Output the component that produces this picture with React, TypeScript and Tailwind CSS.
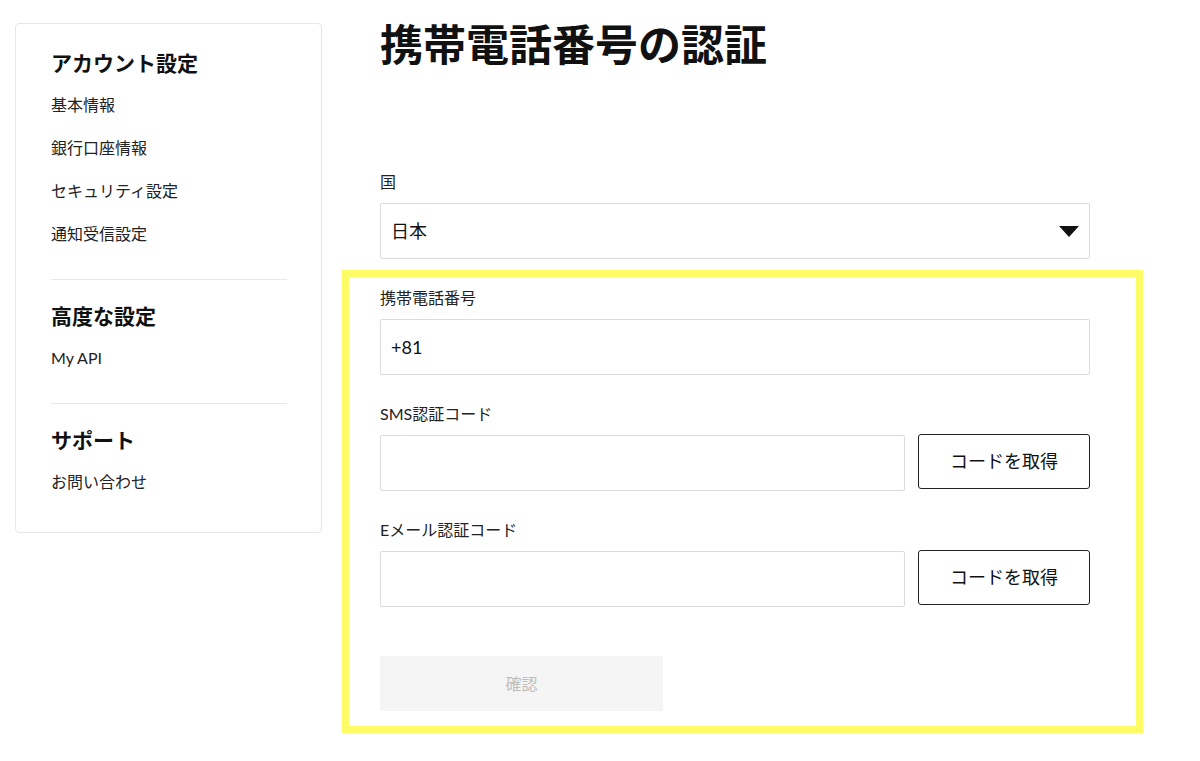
import { Fragment } from "react";

const font = { fontFamily: 'Lato, "Noto Sans CJK JP", sans-serif' };

const sections = [
  { title: "アカウント設定", items: ["基本情報", "銀行口座情報", "セキュリティ設定", "通知受信設定"] },
  { title: "高度な設定", items: ["My API"] },
  { title: "サポート", items: ["お問い合わせ"] },
];

const Sidebar = () => (
  <aside className="w-[307px] shrink-0 rounded-[4px] border border-[#e6e6e6] pl-[35px] pr-[34px] pt-[24px] pb-[29px]">
    {sections.map((s, i) => (
      <Fragment key={s.title}>
        {i > 0 && <div className="mt-[24px] mb-[21px] h-px bg-[#e8e8e8]" />}
        <h3 className="mb-[5px] text-[21px] font-bold leading-[30px] text-[#111]">{s.title}</h3>
        {s.items.map((item) => (
          <div key={item} className="flex h-[43px] items-center text-[16px] text-[#222]">
            {item}
          </div>
        ))}
      </Fragment>
    ))}
  </aside>
);

const Label = ({ children }: { children: string }) => (
  <div className="mb-[9px] text-[16px] leading-[24px] text-[#222]">{children}</div>
);

const CodeRow = ({ label }: { label: string }) => (
  <div className="mt-[27px]">
    <Label>{label}</Label>
    <div className="flex items-start gap-[13px]">
      <input className="h-[56px] flex-1 rounded-[2px] border border-[#dcdcdc] px-[11px] text-[18px] outline-none" />
      <button className="-mt-px h-[55px] w-[172px] rounded-[3px] border border-[#222] bg-white text-[18px] text-[#111]">
        コードを取得
      </button>
    </div>
  </div>
);

export default function App() {
  return (
    <div className="flex min-h-[761px] bg-white pl-[15px]" style={font}>
      <div className="pt-[23px]">
        <Sidebar />
      </div>
      <main className="ml-[58px] w-[710px] pt-[20px]">
        <h1 className="text-[43px] font-bold leading-[50px] text-[#111]">携帯電話番号の認証</h1>

        <div className="mt-[100px]">
          <Label>国</Label>
          <div className="flex h-[56px] items-center justify-between rounded-[2px] border border-[#dcdcdc] pl-[10px] pr-[10px]">
            <span className="text-[18px] text-[#111]">日本</span>
            <svg width="20" height="11" viewBox="0 0 20 11">
              <path d="M0 0H20L10 11Z" fill="#111" />
            </svg>
          </div>
        </div>

        <div className="mt-[11px] -ml-[38px] -mr-[53px] border-[7px] border-[#fdfb66] pl-[31px] pr-[46px] pt-[9px] pb-[15px]">
          <Label>携帯電話番号</Label>
          <div className="flex h-[56px] items-center rounded-[2px] border border-[#dcdcdc] px-[10px] text-[18px] text-[#111]">
            +81
          </div>

          <CodeRow label="SMS認証コード" />
          <CodeRow label="Eメール認証コード" />

          <button className="mt-[49px] h-[55px] w-[283px] bg-[#f5f5f5] text-[16px] text-[#bdbdbd]">
            確認
          </button>
        </div>
      </main>
    </div>
  );
}
